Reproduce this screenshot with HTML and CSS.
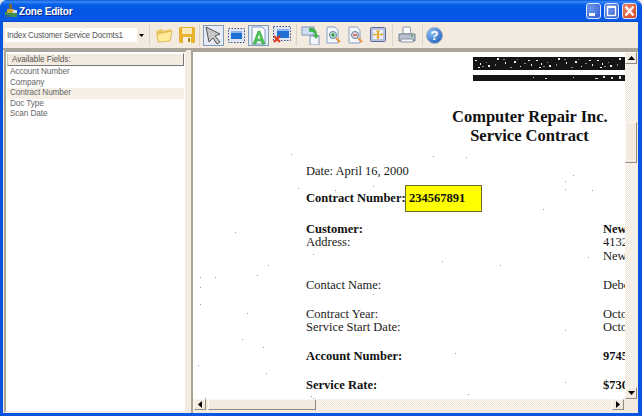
FILE: index.html
```html
<!DOCTYPE html>
<html lang="en">
<head>
<meta charset="utf-8">
<title>Zone Editor</title>
<link rel="stylesheet" href="styles.css">
</head>
<body>
<div class="window">
  <header class="titlebar">
    <svg class="app-icon" width="14" height="16" viewBox="0 0 14 16"><rect x="5" y="1" width="3" height="5" fill="#7a6a3a"/><rect x="1" y="9" width="12" height="5" fill="#3f8f4f"/><rect x="3" y="6" width="7" height="4" fill="#c9a63c"/><rect x="9" y="7" width="4" height="3" fill="#d8d8e8"/><rect x="1" y="12" width="5" height="3" fill="#2e5fa8"/></svg>
    <span class="title">Zone Editor</span>
    <div class="caption-buttons">
      <button class="cap"><svg width="15" height="16" viewBox="0 0 15 16"><rect x="3" y="10" width="6" height="3" fill="#fff"/></svg></button>
      <button class="cap"><svg width="15" height="16" viewBox="0 0 15 16"><rect x="3.5" y="3.5" width="8" height="9" fill="none" stroke="#fff" stroke-width="1.4"/><rect x="3" y="3" width="9" height="2" fill="#fff"/></svg></button>
      <button class="cap close"><svg width="15" height="16" viewBox="0 0 15 16"><path d="M3.5 3.5l8 9M11.5 3.5l-8 9" stroke="#fff" stroke-width="2.2"/></svg></button>
    </div>
  </header>
  <div class="content">
    <div class="toolbar">
      <div class="combo"><span class="combo-text">Index Customer Service Docmts1</span><span class="combo-btn"><svg width="5" height="3" viewBox="0 0 5 3"><path d="M0 0h5L2.500 3z" fill="#000"/></svg></span></div>
      <i class="sep s1"></i>
      <svg class="ico folder" width="18" height="18" viewBox="0 0 18 18"><path d="M1 5l6-2 1 2 8-2-1 12-12 1z" fill="#e8c860"/><path d="M2 8l15-3-2 10-12 1z" fill="#ffeb99" stroke="#d4a93c" stroke-width=".7"/></svg>
      <svg class="ico disk" width="18" height="18" viewBox="0 0 18 18"><rect x="1" y="1" width="16" height="16" rx="1.500" fill="#eab12e"/><rect x="4" y="2" width="10" height="6" fill="#f8e9b8"/><rect x="5" y="11" width="8" height="6" fill="#f6f1e2"/><rect x="10" y="12" width="2" height="4" fill="#a87c10"/></svg>
      <i class="sep s2"></i>
      <span class="tool on t-arrow"><svg width="19" height="19" viewBox="0 0 19 19"><path d="M2 1l14 7-5 2 5 6-3 2-4-6-4 4z" fill="#c7c7c7" stroke="#555" stroke-width="1"/></svg></span>
      <span class="tool t-rect"><svg width="17" height="17" viewBox="0 0 17 17"><rect x=".5" y="1.500" width="16" height="14" fill="#dfe6f2" stroke="#3a4f8f" stroke-dasharray="1.500 1.500"/><rect x="3" y="4" width="11" height="8" fill="#1f6fd6"/><rect x="3" y="4" width="11" height="2" fill="#8fb6ea"/></svg></span>
      <span class="tool on t-a"><svg width="19" height="19" viewBox="0 0 19 19"><path d="M3 1h10l3 3v14H3z" fill="#fff" stroke="#7c9ac8"/><path d="M4 18L9 5h2l5 13h-3l-1-3H8l-1 3z" fill="#4cc258" stroke="#2a9a3a" stroke-width=".5"/><path d="M8.700 12.500h2.600L10 8.500z" fill="#fff"/></svg></span>
      <span class="tool t-del"><svg width="18" height="18" viewBox="0 0 18 18"><rect x=".5" y=".5" width="17" height="14" fill="#dfe6f2" stroke="#3a4f8f" stroke-dasharray="1.500 1.500"/><rect x="4" y="3" width="12" height="9" fill="#1f6fd6"/><rect x="4" y="3" width="12" height="2" fill="#8fb6ea"/><path d="M1 10l6 6M7 10l-6 6" stroke="#e03a18" stroke-width="2.200"/></svg></span>
      <i class="sep s3"></i>
      <svg class="ico rot" width="19" height="19" viewBox="0 0 19 19"><rect x="1" y="1" width="12" height="8" fill="#cfe0f4" stroke="#7e95b8"/><rect x="9" y="10" width="9" height="9" fill="#f3f6fb" stroke="#7e95b8"/><path d="M8 2c5-1 8 2 8 7h2l-3 4-3-4h2c0-2-2-4-6-3z" fill="#3fb04a"/></svg>
      <svg class="ico zin" width="16" height="18" viewBox="0 0 16 18"><path d="M1 1h8l3 3v13H1z" fill="#f3f6fb" stroke="#8ba0c4"/><circle cx="7" cy="9" r="3.500" fill="#cfeadb" stroke="#5a7a9a"/><path d="M5 9h4M7 7v4" stroke="#188a30" stroke-width="1.200"/><path d="M10 12l4 4" stroke="#e8953a" stroke-width="2"/></svg>
      <svg class="ico zout" width="16" height="18" viewBox="0 0 16 18"><path d="M1 1h8l3 3v13H1z" fill="#f3f6fb" stroke="#8ba0c4"/><circle cx="7" cy="9" r="3.500" fill="#eadcdc" stroke="#5a7a9a"/><path d="M5 9h4" stroke="#c83030" stroke-width="1.200"/><path d="M10 12l4 4" stroke="#e8953a" stroke-width="2"/></svg>
      <svg class="ico fit" width="16" height="16" viewBox="0 0 16 16"><rect x=".5" y=".5" width="15" height="14" rx="1" fill="#b9c2e0" stroke="#5f6a99"/><rect x="3" y="3" width="10" height="9" fill="#eef0f8"/><path d="M8 2.500l2 2.500H9v2h2V6l2.500 1.500L11 9V8H9v2h1l-2 2.500L6 10h1V8H5v1L2.500 7.500 5 6v1h2V5H6z" fill="#e0ad2a"/></svg>
      <i class="sep s4"></i>
      <svg class="ico print" width="18" height="18" viewBox="0 0 18 18"><path d="M5 1h7l1 7H5z" fill="#fff" stroke="#8a97aa"/><path d="M1 8h16v7H1z" fill="#b9c2cf" stroke="#6f7c8f"/><path d="M3 13h12v3H3z" fill="#f4f6f8" stroke="#8a97aa"/><rect x="13" y="9" width="2" height="1.500" fill="#4fb04f"/></svg>
      <i class="sep s5"></i>
      <svg class="ico help" width="17" height="17" viewBox="0 0 17 17"><defs><radialGradient id="hg" cx=".35" cy=".3" r=".8"><stop offset="0" stop-color="#8fc0f2"/><stop offset="1" stop-color="#1c5fc0"/></radialGradient></defs><circle cx="8.500" cy="8.500" r="8" fill="url(#hg)" stroke="#a9b4c4"/><text class="q" x="8.500" y="13" text-anchor="middle">?</text></svg>
    </div>
    <div class="panes">
      <aside class="fields">
        <div class="fields-head">Available Fields:</div>
        <ul class="field-list">
          <li>Account Number</li>
          <li>Company</li>
          <li class="sel">Contract Number</li>
          <li>Doc Type</li>
          <li>Scan Date</li>
        </ul>
      </aside>
      <main class="viewer">
        <div class="viewer-top">
          <div class="page">
            <svg class="redact tall" width="152" height="13" viewBox="0 0 152 13"><defs><pattern id="n1" width="61" height="13" patternUnits="userSpaceOnUse"><rect width="61" height="13" fill="#151515"/><path d="M2 3h2v1H2zM7 6h1v2H7zM15 8h2v2h-2zM24 1h2v2h-2zM32 5h1v2h-1zM5 10h2v1H5zM41 4h2v2h-2zM47 9h1v1h-1zM55 3h2v1h-2zM58 7h1v2h-1z" fill="#eee"/><path d="M9 9h2v1H9zM22 7h1v2h-1zM30 2h2v1h-2zM13 5h1v1h-1zM37 10h2v1h-2zM44 2h1v1h-1zM51 6h2v1h-2z" fill="#888"/></pattern></defs><rect width="152" height="13" fill="url(#n1)"/></svg>
            <svg class="redact thin" width="152" height="6" viewBox="0 0 152 6"><rect width="152" height="6" fill="#151515"/><path d="M60 2h1v1h-1zM72 3h2v1h-2zM100 2h1v1h-1zM122 3h3v1h-3zM130 1h2v2h-2zM138 2h2v2h-2zM146 1h2v3h-2z" fill="#ddd"/></svg>
            <div class="heading">Computer Repair Inc.<br>Service Contract</div>
            <div class="row m-date"><span class="lab">Date: April 16, 2000</span></div>
            <div class="row m-contract b"><span class="contract-label">Contract Number:</span><span class="zone">234567891</span></div>
            <div class="row m-cust b"><span class="lab">Customer:</span><span>New</span></div>
            <div class="row"><span class="lab">Address:</span><span>4132</span></div>
            <div class="row"><span class="lab"></span><span>New</span></div>
            <div class="row m-contact"><span class="lab">Contact Name:</span><span>Debo</span></div>
            <div class="row m-contact"><span class="lab">Contract Year:</span><span>Octo</span></div>
            <div class="row"><span class="lab">Service Start Date:</span><span>Octo</span></div>
            <div class="row m-contact b"><span class="lab">Account Number:</span><span>9745</span></div>
            <div class="row m-contact b"><span class="lab">Service Rate:</span><span>$730</span></div>
            <svg class="specks" width="432" height="347" viewBox="0 0 432 347"><path d="M240 104h1v1h-1zM273 105h1v1h-1zM372 129h1v1h-1zM380 123h1v1h-1zM372 137h1v1h-1zM399 138h1v1h-1zM350 157h1v1h-1zM105 136h1v1h-1zM142 138h1v1h-1zM180 134h1v1h-1zM120 202h1v1h-1zM395 205h1v1h-1zM98 102h1v1h-1zM75 213h1v1h-1zM249 209h1v1h-1zM7 225h1v1H7zM22 225h1v1H22zM64 223h1v1H64zM7 235h1v1H7zM180 242h1v1h-1zM7 252h1v1H7zM54 261h1v1H54zM49 287h1v1H49zM70 295h1v1H70zM262 301h1v1h-1zM5 313h1v1H5zM73 321h1v1H73zM275 342h1v1h-1zM12 346h1v1H12zM120 346h1v1h-1zM118 344h1v1h-1zM42 180h1v1H42zM307 213h1v1h-1zM372 278h1v1h-1zM339 358h1v1h-1zM372 330h1v1h-1z" fill="#999"/></svg>
          </div>
          <div class="vscroll">
            <span class="sb-btn"><svg width="7" height="4" viewBox="0 0 7 4"><path d="M3.500 0L7 4H0z" fill="#000"/></svg></span>
            <span class="sb-track t1"></span>
            <span class="sb-thumb"></span>
            <span class="sb-track t2"></span>
            <span class="sb-btn"><svg width="7" height="4" viewBox="0 0 7 4"><path d="M0 0h7L3.500 4z" fill="#000"/></svg></span>
          </div>
        </div>
        <div class="hscroll">
          <span class="sb-btn"><svg width="4" height="7" viewBox="0 0 4 7"><path d="M4 0v7L0 3.500z" fill="#000"/></svg></span>
          <span class="sb-thumb h"></span>
          <span class="sb-track h2"></span>
          <span class="sb-btn"><svg width="4" height="7" viewBox="0 0 4 7"><path d="M0 0l4 3.500L0 7z" fill="#000"/></svg></span>
          <span class="corner"></span>
        </div>
      </main>
    </div>
  </div>
</div>
</body>
</html>
```
FILE: styles.css
```css
* { box-sizing: border-box; }
html, body { margin: 0; padding: 0; background: #e8e8e8; }
.window {
  width: 642px; height: 416px; overflow: hidden;
  display: flex; flex-direction: column;
  background: #0a55e0; border-radius: 7px 7px 0 0;
  padding: 0 4px 3px 3px;
  font-family: "Liberation Sans", Arial, sans-serif;
}
.titlebar {
  height: 22px; flex: none; margin: 0 -4px 0 -3px; padding: 0 5px 0 4px;
  display: flex; align-items: center; gap: 1px;
  border-radius: 7px 7px 0 0;
  background: linear-gradient(#0a5ae0 0, #3a8cf5 2px, #0a62ea 4px, #0455e0 10px, #0556e6 18px, #0a5ce8 20px, #0348c8 22px);
}
.app-icon { flex: none; }
.title { color: #fff; font-weight: bold; font-size: 10px; letter-spacing: -.2px; text-shadow: 1px 1px 0 #0a2a8a; }
.caption-buttons { margin-left: auto; display: flex; gap: 3px; }
.cap {
  width: 15px; height: 16px; padding: 0; display: block;
  border: 1px solid #dfe8fb; border-radius: 3px;
  background: radial-gradient(circle at 30% 30%, #6f97ee, #2f5bd2);
  position: relative; overflow: hidden;
}
.cap svg { position: absolute; left: -1px; top: -1px; }
.close { background: radial-gradient(circle at 30% 30%, #ec8c6c, #d23e18); }
.content { flex: 1; display: flex; flex-direction: column; background: #f3ebe0; min-height: 0; }
.toolbar {
  height: 28px; flex: none; display: flex; align-items: center;
  background: #f3ebe0; border-bottom: 2px solid #a8a498;
}
.combo {
  width: 140px; height: 14px; margin-left: 2px; flex: none; background: #fff;
  display: flex; align-items: center; justify-content: space-between;
}
.combo-text { font-size: 8.2px; letter-spacing: -.2px; color: #555; padding-left: 2px; white-space: nowrap; }
.combo-btn { width: 8px; height: 14px; background: #f3ebe0; display: flex; align-items: center; justify-content: center; }
.sep { width: 1px; height: 22px; background: #dcd4c6; flex: none; }
.s1 { margin: 0 5px 0 4px; }
.s2 { margin: 0 3px 0 3px; }
.s3 { margin: 0 4px 0 5px; }
.s4 { margin: 0 5px 0 6px; }
.s5 { margin: 0 3px 0 6px; }
.ico { flex: none; display: block; }
.folder { margin-right: 5px; }
.disk { margin-right: 0; }
.tool { display: flex; flex: none; align-items: center; justify-content: center; height: 21px; }
.t-arrow, .t-a { width: 21px; }
.on { border: 1px solid #7f9db9; background: #e6ebf6; }
.t-rect { width: 17px; margin: 0 3px 0 4px; }
.t-del { width: 18px; margin-left: 4px; }
.rot { margin-right: 6px; }
.zin { margin-right: 6px; }
.zout { margin-right: 6px; }
.q { fill: #fff; font: bold 13px "Liberation Sans", sans-serif; }
.panes { flex: 1; display: flex; min-height: 0; background: #f3ebe0; padding: 0 0 0 1px; }
.fields {
  width: 183px; flex: none; background: #fff;
  border: 2px solid; border-color: #a8a498 #f3ebe0 #f3ebe0 #a8a498;
  padding: 1px;
}
.fields-head {
  height: 13px; line-height: 11px; font-size: 8.2px; letter-spacing: -.05px; color: #555; padding-left: 4px;
  background: #f3ebe0; border: 1px solid; border-color: #fff #777 #777 #ccc;
}
.field-list { list-style: none; margin: 1px 0 0; padding: 0; }
.field-list li { height: 10.500px; line-height: 10.500px; font-size: 8.2px; letter-spacing: -.1px; color: #666; padding-left: 3px; }
.field-list .sel { background: #f5efe6; }
.viewer { flex: 1; margin-left: 4px; min-width: 0; border-left: 2px solid #a8a498; border-top: 2px solid #a8a498; display: flex; flex-direction: column; background: #f3ebe0; padding-bottom: 3px; }
.viewer-top { flex: 1; display: flex; min-height: 0; }
.page {
  flex: 1; min-width: 0; background: #fff; overflow: hidden; position: relative;
  font-family: "Liberation Serif", "Times New Roman", serif; font-size: 12.500px; color: #1a1a1a;
  padding-top: 5px;
}
.redact { display: block; margin-left: 280px; }
.thin { margin-top: 5px; }
.heading { margin-left: 259px; width: 155px; font: bold 16.500px/19px "Liberation Serif", serif; color: #111; margin-top: 26px; text-align: center; white-space: nowrap; }
.row { display: flex; height: 13.500px; line-height: 13.500px; padding-left: 113px; white-space: nowrap; }
.lab { width: 297px; flex: none; }
.b { font-weight: bold; color: #111; }
.m-date { margin-top: 20px; }
.m-contract { margin-top: 6px; height: 27px; line-height: 27px; }
.contract-label { width: 99px; flex: none; }
.zone { width: 77px; height: 27px; flex: none; background: #ff0; border: 1px solid #6b6b30; padding-left: 3px; line-height: 25px; }
.m-cust { margin-top: 11px; }
.m-contact { margin-top: 15.600px; }
.specks { position: absolute; left: 0; top: 0; }
.vscroll { width: 13px; flex: none; display: flex; flex-direction: column; }
.sb-btn { display: flex; align-items: center; justify-content: center; width: 12px; height: 12px; flex: none; background: #f3ebe0; border: 1px solid; border-color: #fbf8f2 #8f8b80 #8f8b80 #fbf8f2; }
.sb-track { background-color: #fbf8f3; background-image: linear-gradient(45deg, #efe7da 25%, transparent 25%, transparent 75%, #efe7da 75%), linear-gradient(45deg, #efe7da 25%, transparent 25%, transparent 75%, #efe7da 75%); background-size: 2px 2px; background-position: 0 0, 1px 1px; }
.t1 { height: 58px; }
.t2 { flex: 1; }
.sb-thumb { width: 12px; height: 41px; flex: none; background: #f3ebe0; border: 1px solid; border-color: #fbf8f2 #8f8b80 #8f8b80 #fbf8f2; }
.hscroll { height: 11px; flex: none; display: flex; padding-left: 1px; }
.hscroll .sb-btn { height: 11px; }
.sb-thumb.h { width: 108px; height: 11px; margin-left: 2px; }
.h2 { flex: 1; }
.corner { width: 14px; flex: none; background: #f3ebe0; }
```
